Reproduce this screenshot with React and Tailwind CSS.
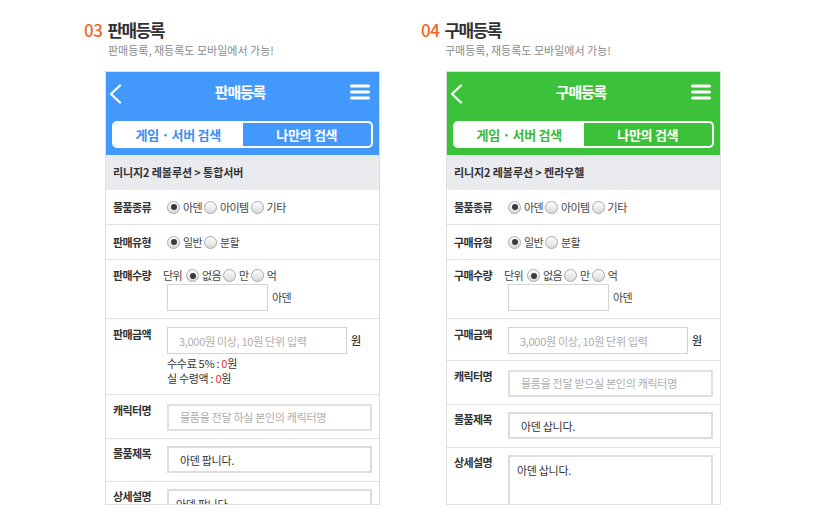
import React from "react";

const FONT = "font-['Noto_Sans_CJK_KR','Noto_Sans',sans-serif]";

const Radio = ({ checked }) => (
  <span className="inline-flex items-center justify-center w-[13px] h-[13px] rounded-full border border-[#a9a9a9] bg-gradient-to-b from-white to-[#d9d9d9] shrink-0">
    {checked && <span className="w-[6px] h-[6px] rounded-full bg-[#3a3a3a]" />}
  </span>
);

const RadioItem = ({ checked, label }) => (
  <span className="inline-flex items-center gap-[3px] mr-[2px]">
    <Radio checked={checked} />
    <span className="text-[11px] tracking-[-0.6px] text-[#444]">{label}</span>
  </span>
);

const Row = ({ label, children, className = "" }) => (
  <div className={`flex border-b border-[#e2e2e2] pl-[7px] pr-[7px] ${className}`}>
    <div className="w-[54px] shrink-0 text-[11px] font-bold tracking-[-0.6px] leading-[14px] text-[#333]">
      {label}
    </div>
    <div className="flex-1 min-w-0">{children}</div>
  </div>
);

const TextBox = ({ placeholder, value, className = "" }) => (
  <input
    readOnly
    placeholder={placeholder}
    defaultValue={value}
    className={`h-[27px] border border-[#d4d4d4] bg-white px-[11px] text-[11px] tracking-[-0.3px] text-[#333] placeholder:text-[#adadad] outline-none ${className}`}
  />
);

const Phone = ({ color, textColor, title, crumb, kind, charHint, itemTitle, showFee }) => (
  <div className="w-[275px] h-[434px] border border-[#dedede] overflow-hidden bg-white">
    {/* 상단 헤더 */}
    <div className={`${color} pb-[7px]`}>
      <div className="h-[41px] flex items-center justify-between pl-[2px] pr-[9px]">
        <svg width="14" height="20" viewBox="0 0 14 20" className="mt-[3px]">
          <path d="M12 1.5 L3 10 L12 18.5" fill="none" stroke="white" strokeWidth="2.2" strokeLinecap="round" strokeLinejoin="round" />
        </svg>
        <div className="text-white text-[15px] font-bold tracking-[-1.2px] pl-[8px]">{title}</div>
        <svg width="20" height="17" viewBox="0 0 20 17">
          <rect x="0" y="0.5" width="20" height="3" rx="1.5" fill="white" />
          <rect x="0" y="6.5" width="20" height="3" rx="1.5" fill="white" />
          <rect x="0" y="12.5" width="20" height="3" rx="1.5" fill="white" />
        </svg>
      </div>
      <div className="mt-[8px] mx-[6px] h-[27px] flex border-2 border-white rounded-[5px] overflow-hidden">
        <div className={`flex-1 bg-white flex items-center justify-center text-[13px] font-bold tracking-[-0.3px] ${textColor}`}>
          게임 · 서버 검색
        </div>
        <div className="flex-1 flex items-center justify-center text-[13px] font-bold tracking-[-0.3px] text-white">
          나만의 검색
        </div>
      </div>
    </div>

    {/* 경로 */}
    <div className="h-[35px] bg-[#e9ebee] flex items-center pl-[7px] text-[11px] font-bold tracking-[-0.1px] text-[#333]">
      {crumb}
    </div>

    <Row label="물품종류" className="h-[35px] items-center">
      <div className="flex items-center">
        <RadioItem checked label="아덴" />
        <RadioItem label="아이템" />
        <RadioItem label="기타" />
      </div>
    </Row>

    <Row label={`${kind}유형`} className="h-[35px] items-center">
      <div className="flex items-center">
        <RadioItem checked label="일반" />
        <RadioItem label="분할" />
      </div>
    </Row>

    <Row label={`${kind}수량`} className="pt-[8px] pb-[7px]">
      <div className="flex items-center h-[15px] -ml-[4px]">
        <span className="text-[11px] tracking-[-0.6px] text-[#444] mr-[4px]">단위</span>
        <RadioItem checked label="없음" />
        <RadioItem label="만" />
        <RadioItem label="억" />
      </div>
      <div className="flex items-center mt-[1px]">
        <TextBox className="w-[101px]" />
        <span className="ml-[4px] text-[11px] tracking-[-0.6px] text-[#444]">아덴</span>
      </div>
    </Row>

    <Row label={`${kind}금액`} className={showFee ? "pt-[8px] pb-[8px]" : "pt-[8px] pb-[6px]"}>
      <div className="flex items-center">
        <TextBox placeholder="3,000원 이상, 10원 단위 입력" className="w-[180px]" />
        <span className="ml-[4px] text-[11px] text-[#333] font-medium">원</span>
      </div>
      {showFee && (
        <div className="mt-[2px] text-[11px] leading-[15px] tracking-[-0.3px] text-[#333]">
          <div>
            수수료 5% : <span className="text-[#ff2a1a]">0</span>원
          </div>
          <div>
            실 수령액 : <span className="text-[#ff2a1a]">0</span>원
          </div>
        </div>
      )}
    </Row>

    <Row label="캐릭터명" className="pt-[8px] pb-[7px]">
      <TextBox placeholder={charHint} className="w-full border-2 border-[#e0e0e0]" />
    </Row>

    <Row label="물품제목" className="pt-[7px] pb-[8px]">
      <TextBox value={itemTitle} className="w-full border-2 border-[#dcdcdc]" />
    </Row>

    <Row label="상세설명" className="pt-[7px] pb-[7px]">
      <textarea
        readOnly
        defaultValue={itemTitle}
        className="block w-full h-[90px] resize-none border-2 border-[#dcdcdc] px-[7px] pt-[5px] text-[11px] tracking-[-0.3px] text-[#333] outline-none"
      />
    </Row>
  </div>
);

const Section = ({ num, title, sub, children, panelIndent }) => (
  <div className="flex flex-col">
    <div className="flex items-center h-[20px] mt-[20px]">
      <span className="text-[17px] text-[#f5651c] font-medium tracking-[-0.5px] leading-[20px]">{num}</span>
      <span className="ml-[5px] text-[17px] font-bold text-[#333] tracking-[-1.5px] leading-[20px]">{title}</span>
    </div>
    <div className="ml-[24px] mt-[3px] h-[15px] leading-[15px] text-[11px] text-[#8a8a8a] tracking-[0px]">{sub}</div>
    <div className={`mt-[13px] ${panelIndent}`}>{children}</div>
  </div>
);

export default function App() {
  return (
    <div className={`w-[820px] h-[532px] bg-white overflow-hidden ${FONT}`}>
      <div className="flex pl-[84px] gap-[41px]">
        <Section num="03" title="판매등록" sub="판매등록, 재등록도 모바일에서 가능!" panelIndent="ml-[21px]">
          <Phone
            color="bg-[#4399fb]"
            textColor="text-[#3b8ff0]"
            title="판매등록"
            crumb="리니지2 레볼루션 > 통합서버"
            kind="판매"
            charHint="물품을 전달 하실 본인의 캐릭터명"
            itemTitle="아덴 팝니다."
            showFee
          />
        </Section>
        <Section num="04" title="구매등록" sub="구매등록, 재등록도 모바일에서 가능!" panelIndent="ml-[25px]">
          <Phone
            color="bg-[#3cc23a]"
            textColor="text-[#37b936]"
            title="구매등록"
            crumb="리니지2 레볼루션 > 켄라우헬"
            kind="구매"
            charHint="물품을 전달 받으실 본인의 캐릭터명"
            itemTitle="아덴 삽니다."
          />
        </Section>
      </div>
    </div>
  );
}
